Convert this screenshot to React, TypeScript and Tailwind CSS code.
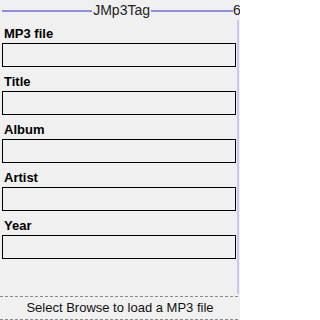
import React from 'react'

const fields = ['MP3 file', 'Title', 'Album', 'Artist', 'Year']

function Field({ label }: { label: string }) {
  return (
    <div className="mb-[7px]">
      <div className="pl-[4px] h-[16px] text-[13px] leading-[16px] font-bold text-black">{label}</div>
      <div className="mt-[1px] ml-[2px] w-[234px] h-[24px] border border-black bg-[#f0f1f0]" />
    </div>
  )
}

export default function App() {
  return (
    <div
      className="w-[240px] h-[320px] bg-[#eff0ef] overflow-hidden flex flex-col text-[#111]"
      style={{ fontFamily: '"Liberation Sans", Arial, sans-serif' }}
    >
      {/* Title bar */}
      <div className="h-[20px] flex items-start">
        <div className="ml-[2px] mt-[10px] flex-1 h-[2px] bg-[#8e8ee0]" />
        <div className="px-[1px] mt-[2px] text-[14px] leading-[16px] text-[#222]">JMp3Tag</div>
        <div className="mt-[10px] w-[82px] h-[2px] bg-[#8e8ee0]" />
        <div className="mt-[2px] w-[7px] text-[14px] leading-[16px] text-[#222]">6</div>
      </div>

      {/* Form */}
      <div className="h-[276px] flex">
        <div className="flex-1 pt-[6px]">
          {fields.map((f) => (
            <Field key={f} label={f} />
          ))}
        </div>
        <div className="w-[2px] h-[274px] mr-[1px] bg-[#c9c9ee]" />
      </div>

      {/* Status */}
      <div className="h-[1px] bg-[repeating-linear-gradient(to_right,#8a8a8a_0_3px,transparent_3px_5px)]" />
      <div className="h-[22px] text-center text-[13px] leading-[21px] text-[#111]">
        Select Browse to load a MP3 file
      </div>
      <div className="h-[1px] bg-[repeating-linear-gradient(to_right,#8a8a8a_0_3px,transparent_3px_5px)]" />
    </div>
  )
}
